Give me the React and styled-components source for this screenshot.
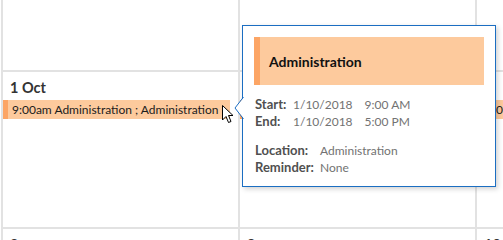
import React from 'react';
import styled, { createGlobalStyle } from 'styled-components';

const GlobalStyle = createGlobalStyle`
    html, body {
        margin: 0;
        padding: 0;
        background: #fff;
        overflow: hidden;
    }

    body {
        font-family: Lato, "Noto Sans", sans-serif;
    }
`;

const Page = styled.div`
    position: relative;
    width: 503px;
    height: 240px;
    overflow: hidden;
`;

const MonthGrid = styled.div`
    display: grid;
    grid-template-columns: repeat(3, 237px);
    grid-template-rows: 72px 157px 60px;
    margin-left: 1px;
    width: 711px;
`;

const DayCell = styled.div`
    border-left: 2px solid #e2e2e2;
    border-bottom: 2px solid #e2e2e2;
    padding-top: 7px;
    box-sizing: border-box;
    overflow: hidden;
`;

const DayLabel = styled.div`
    font-family: Lato, sans-serif;
    font-weight: 700;
    font-size: 14.5px;
    line-height: 18px;
    color: #333;
    padding-left: 7px;
    height: 20px;
`;

const EventBar = styled.div`
    display: flex;
    align-items: center;
    height: 19px;
    margin-top: 1px;
    margin-left: -1px;
    margin-right: ${props => props.$gap}px;
    background: #fdca9d;
    border-left: 6px solid #fca565;
    padding-left: 4px;
    font-family: Lato, sans-serif;
    font-size: 12px;
    color: #1c1c1c;
    white-space: nowrap;
    overflow: hidden;
`;

const Popup = styled.div`
    position: absolute;
    left: 242px;
    top: 25px;
    width: 254px;
    height: 162px;
    box-sizing: border-box;
    background: #fff;
    border: 1px solid #1b6ec2;
    box-shadow: 2px 2px 5px rgba(0, 0, 0, 0.18);
    padding: 11px 11px 0 11px;
    font-family: Lato, sans-serif;
`;

const Notch = styled.svg`
    position: absolute;
    left: -9px;
    top: 71px;
`;

const PopupHeader = styled.div`
    display: flex;
    align-items: center;
    height: 48px;
    background: #fdca9d;
    border-left: 6px solid #fca565;
    padding-left: 9px;
    font-weight: 700;
    font-size: 14px;
    color: #111;
`;

const DetailGroup = styled.div`
    display: grid;
    grid-template-columns: ${props => props.$labelWidth}px auto;
    align-items: baseline;
    margin-top: ${props => props.$top}px;
    padding-left: 1px;
    line-height: 17px;
`;

const Label = styled.span`
    font-weight: 700;
    font-size: 13px;
    color: #505050;
    white-space: nowrap;
`;

const Value = styled.span`
    font-size: 12px;
    color: #727272;
    display: flex;
    gap: 12px;
    white-space: nowrap;
`;

const Cursor = styled.svg`
    position: absolute;
    left: 221px;
    top: 104px;
`;

const days = [
    { label: '', bar: false },
    { label: '', bar: false },
    { label: '', bar: false },
    { label: '1 Oct', bar: true },
    { label: '', bar: true },
    { label: '', bar: true },
    { label: '8', bar: false },
    { label: '9', bar: false },
    { label: '10', bar: false },
];

const App = () => {
    return (
        <Page>
            <GlobalStyle />
            <MonthGrid>
                {
                    days.map((d, i) => (
                        <DayCell key={i}>
                            {i >= 3 && <DayLabel>{d.label}</DayLabel>}
                            {d.bar && <EventBar $gap={i === 3 ? 8 : 2}>9:00am Administration ; Administration</EventBar>}
                        </DayCell>
                    ))
                }
            </MonthGrid>

            <Popup>
                <Notch width="10" height="22" viewBox="0 0 10 22">
                    <path d="M10 0 L1 11 L10 22 Z" fill="#fff" />
                    <path d="M9.5 0 L1 11 L9.5 22" fill="none" stroke="#1b6ec2" strokeWidth="1" />
                </Notch>
                <PopupHeader>Administration</PopupHeader>
                <DetailGroup $labelWidth={38} $top={11}>
                    <Label>Start:</Label>
                    <Value><span>1/10/2018</span><span>9:00 AM</span></Value>
                    <Label>End:</Label>
                    <Value><span>1/10/2018</span><span>5:00 PM</span></Value>
                </DetailGroup>
                <DetailGroup $labelWidth={65} $top={12}>
                    <Label>Location:</Label>
                    <Value>Administration</Value>
                    <Label>Reminder:</Label>
                    <Value>None</Value>
                </DetailGroup>
            </Popup>

            <Cursor width="13" height="20" viewBox="0 0 13 20">
                <path d="M1.5 1.5 L1.5 16 L5 12.5 L7.5 18.5 L10 17.5 L7.5 11.5 L12 11.5 Z" fill="#fff" stroke="#000" strokeWidth="1" strokeLinejoin="miter" />
            </Cursor>
        </Page>
    );
};

export default App;
